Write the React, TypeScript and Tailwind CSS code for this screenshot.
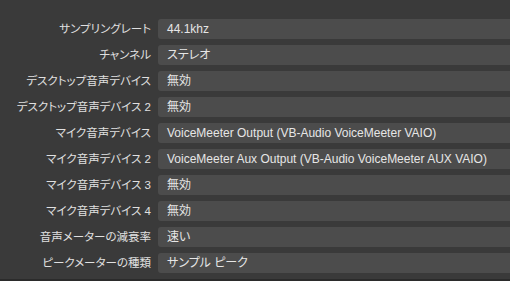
import React from "react";

const rows: [string, string][] = [
  ["サンプリングレート", "44.1khz"],
  ["チャンネル", "ステレオ"],
  ["デスクトップ音声デバイス", "無効"],
  ["デスクトップ音声デバイス 2", "無効"],
  ["マイク音声デバイス", "VoiceMeeter Output (VB-Audio VoiceMeeter VAIO)"],
  ["マイク音声デバイス 2", "VoiceMeeter Aux Output (VB-Audio VoiceMeeter AUX VAIO)"],
  ["マイク音声デバイス 3", "無効"],
  ["マイク音声デバイス 4", "無効"],
  ["音声メーターの減衰率", "速い"],
  ["ピークメーターの種類", "サンプル ピーク"],
];

export default function App() {
  return (
    <div
      className="w-[510px] h-[281px] bg-[#3a3a3a] border-b-2 border-[#2b2b2b] pt-[19px] flex flex-col gap-[6px] overflow-hidden [font-feature-settings:'palt']"
      style={{ fontFamily: '"Liberation Sans", "Noto Sans CJK JP", sans-serif' }}
    >
      {rows.map(([label, value]) => (
        <div key={label} className="flex items-center h-[20px] gap-[7px]">
          <div className="w-[151px] shrink-0 text-right text-[11.5px] text-[#e0e0e0] whitespace-nowrap leading-[20px]">
            {label}
          </div>
          <div className="flex-1 h-[20px] rounded-l-[3px] bg-[#4c4c4c] pl-[9px] text-[12px] text-[#e6e6e6] leading-[20px] whitespace-nowrap">
            {value}
          </div>
        </div>
      ))}
    </div>
  );
}
